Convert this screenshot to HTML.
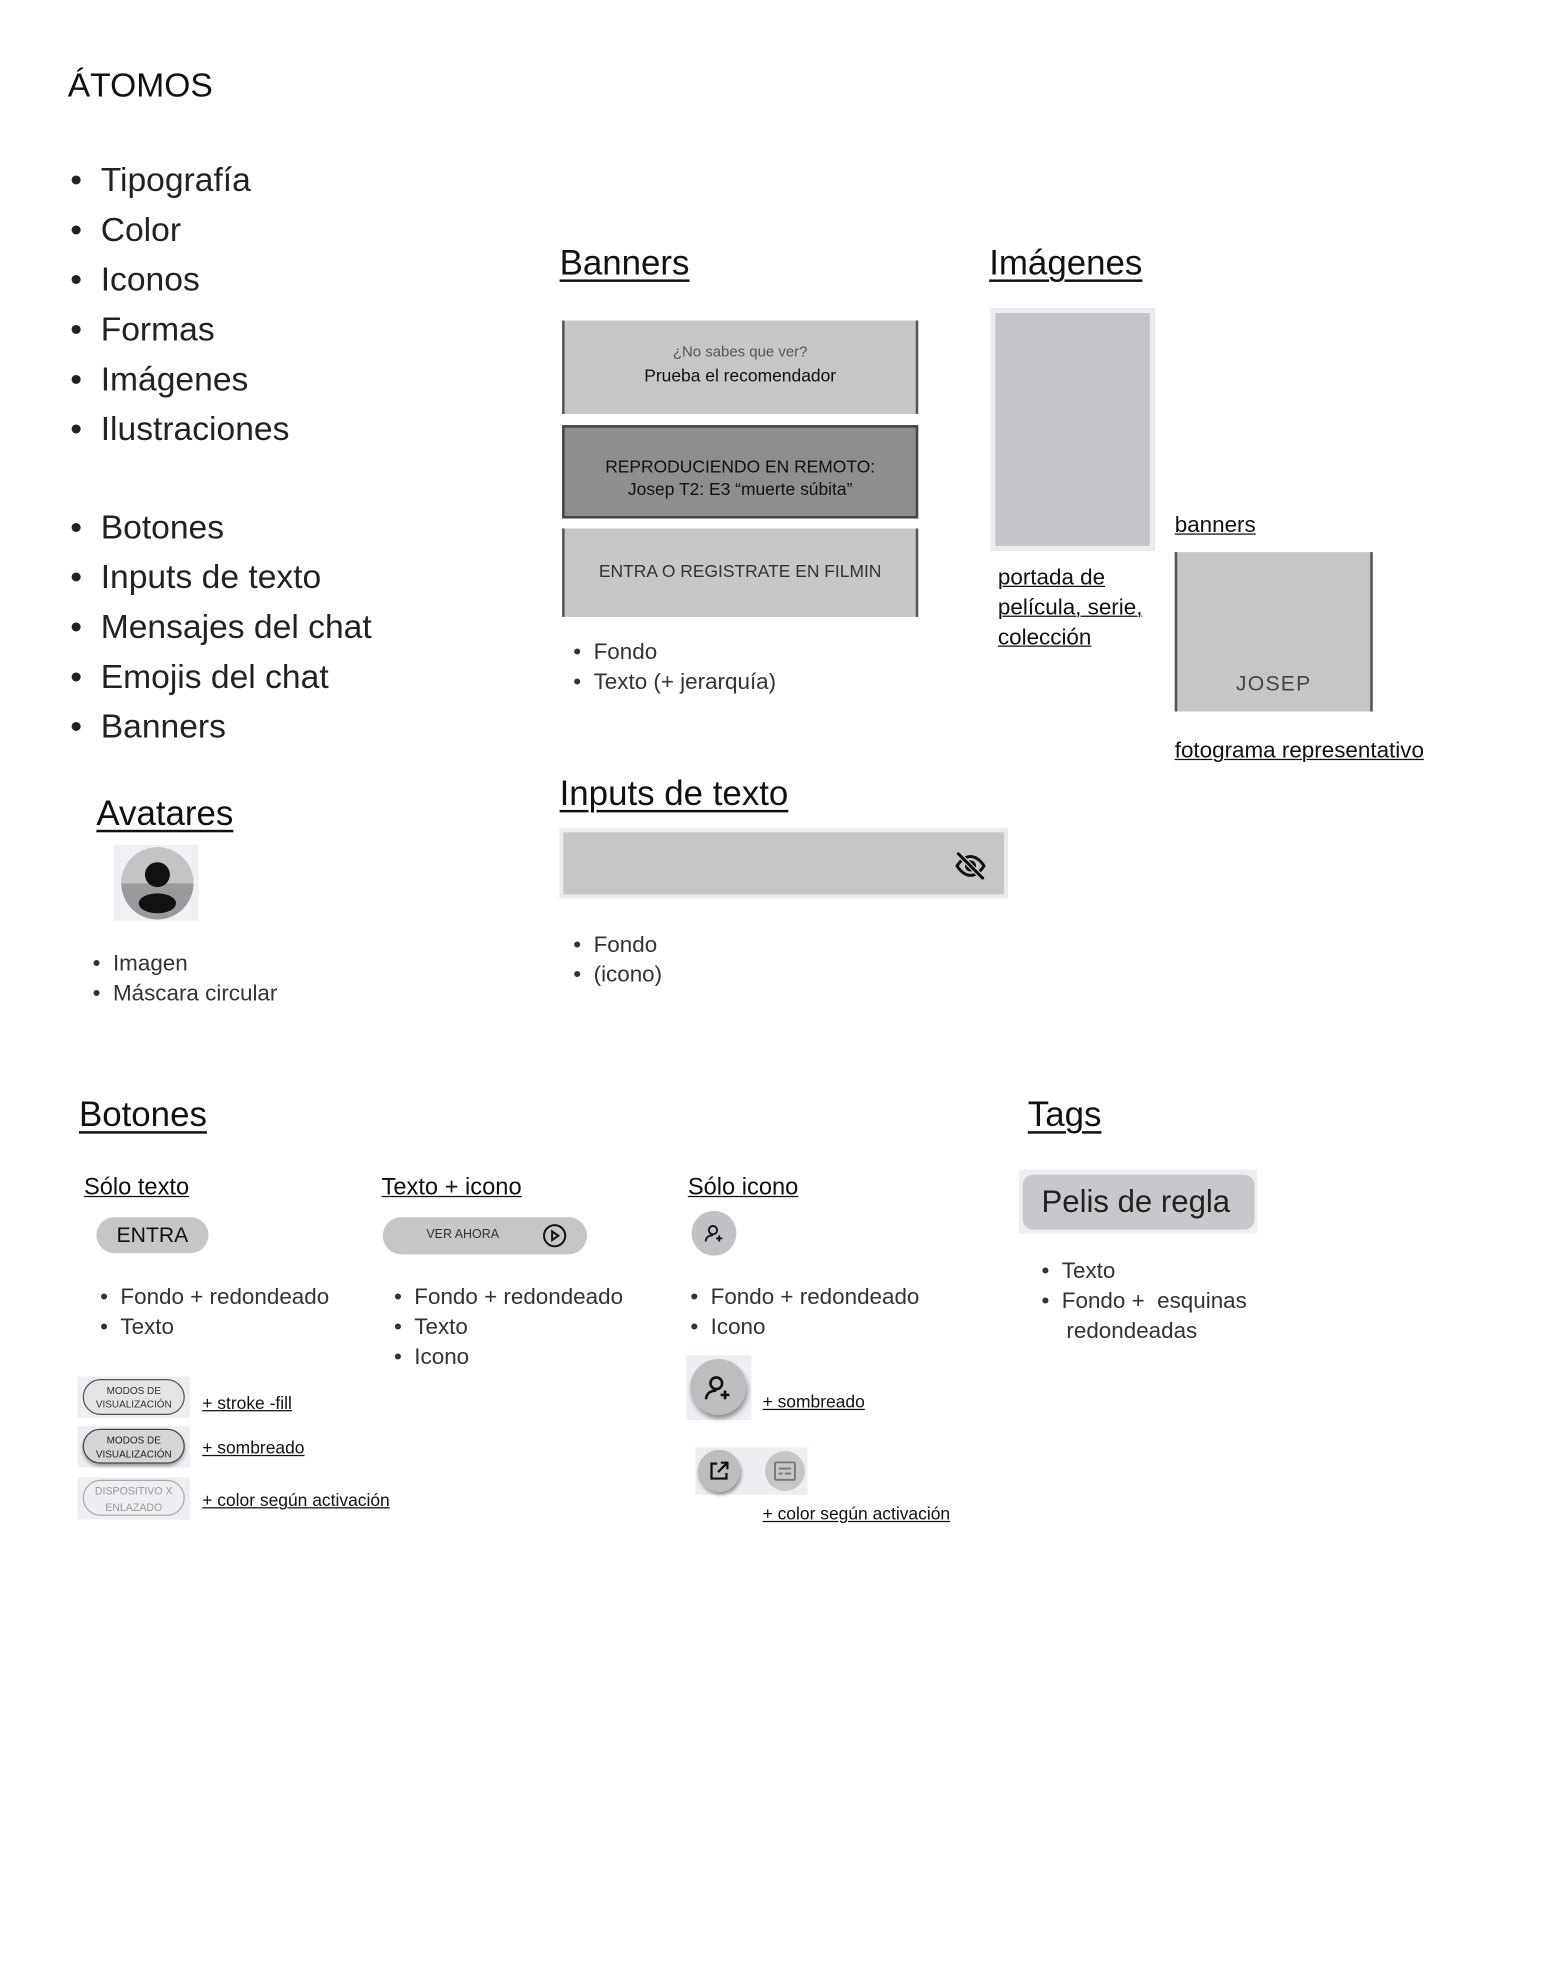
<!DOCTYPE html>
<html><head><meta charset="utf-8">
<style>
html,body{margin:0;padding:0;background:#fff;width:1544px;height:1964px;overflow:hidden}
#w{position:absolute;left:3px;top:3px;width:1240px;height:1577px;transform:scale(1.2452);transform-origin:0 0;font-family:"Liberation Sans",sans-serif;color:#111}
.a{position:absolute;white-space:nowrap}
.h{font-size:28px;text-decoration:underline;text-underline-offset:4px;text-decoration-thickness:1.5px;color:#111}
.big{font-size:27px;color:#222}
.u{text-decoration:underline;text-decoration-thickness:1px}
.box{position:absolute;background:#c6c6c8;box-sizing:border-box}
</style></head><body><div id="w">
<div class="a" style="left:52px;top:51px;font-size:27px;color:#111">ÁTOMOS</div>

<div class="a big" style="left:54px;top:122px;line-height:40px">
•&nbsp;&nbsp;Tipografía<br>•&nbsp;&nbsp;Color<br>•&nbsp;&nbsp;Iconos<br>•&nbsp;&nbsp;Formas<br>•&nbsp;&nbsp;Imágenes<br>•&nbsp;&nbsp;Ilustraciones</div>
<div class="a big" style="left:54px;top:401px;line-height:40px">
•&nbsp;&nbsp;Botones<br>•&nbsp;&nbsp;Inputs de texto<br>•&nbsp;&nbsp;Mensajes del chat<br>•&nbsp;&nbsp;Emojis del chat<br>•&nbsp;&nbsp;Banners</div>

<div class="a h" style="left:447px;top:193px">Banners</div>
<div class="box" style="left:449px;top:255px;width:286px;height:75px;border-left:2px solid #555;border-right:2px solid #555;text-align:center;padding-top:18px;font-size:12px;color:#555">¿No sabes que ver?<div style="font-size:14px;color:#111;margin-top:4px">Prueba el recomendador</div></div>
<div class="box" style="left:449px;top:339px;width:286px;height:75px;background:#8e8e90;border:2px solid #444;text-align:center;padding-top:22px;font-size:14px;line-height:18px;color:#111">REPRODUCIENDO EN REMOTO:<br>Josep T2: E3 “muerte súbita”</div>
<div class="box" style="left:449px;top:422px;width:286px;height:71px;border-left:2px solid #555;border-right:2px solid #555;text-align:center;padding-top:26px;font-size:14px;color:#333">ENTRA O REGISTRATE EN FILMIN</div>
<div class="a" style="left:458px;top:509px;font-size:18px;line-height:24px;color:#333">•&nbsp;&nbsp;Fondo<br>•&nbsp;&nbsp;Texto (+ jerarquía)</div>

<div class="a h" style="left:792px;top:193px">Imágenes</div>
<div class="box" style="left:793px;top:245px;width:132px;height:195px;border:4px solid #ececf0;background:#c4c4c8"></div>
<div class="a u" style="left:799px;top:449px;font-size:18px;line-height:24px">portada de<br>película, serie,<br>colección</div>
<div class="a u" style="left:941px;top:409px;font-size:18px">banners</div>
<div class="box" style="left:941px;top:441px;width:159px;height:128px;border-left:2px solid #555;border-right:2px solid #555;text-align:center;padding-top:96px;font-size:17px;color:#444;letter-spacing:1px">JOSEP</div>
<div class="a u" style="left:941px;top:590px;font-size:18px">fotograma representativo</div>

<div class="a h" style="left:447px;top:619px">Inputs de texto</div>
<div class="box" style="left:447px;top:663px;width:360px;height:56px;border:3px solid #ececf0"></div>
<svg class="a" style="left:764px;top:680px" width="26" height="26" viewBox="0 0 24 24" fill="none" stroke="#111" stroke-width="2.2" stroke-linecap="round"><path d="M2 12s4-7 10-7 10 7 10 7-4 7-10 7S2 12 2 12z"/><circle cx="12" cy="12" r="3"/><path d="M3 3l18 18" stroke="#c6c6c8" stroke-width="4"/><path d="M3 3l18 18"/></svg>
<div class="a" style="left:458px;top:744px;font-size:18px;line-height:24px;color:#333">•&nbsp;&nbsp;Fondo<br>•&nbsp;&nbsp;(icono)</div>

<div class="a h" style="left:75px;top:635px">Avatares</div>
<div class="box" style="left:89px;top:676px;width:68px;height:61px;background:#eef0f4"></div>
<svg class="a" style="left:94px;top:677px" width="60" height="60" viewBox="0 0 60 60"><circle cx="30" cy="30" r="29" fill="#9a9a9c"/><path d="M1 30a29 29 0 0 1 58 0z" fill="#c4c4c6"/><circle cx="30" cy="23" r="10" fill="#111"/><ellipse cx="30" cy="46" rx="15" ry="8" fill="#111"/></svg>
<div class="a" style="left:72px;top:759px;font-size:18px;line-height:24px;color:#333">•&nbsp;&nbsp;Imagen<br>•&nbsp;&nbsp;Máscara circular</div>

<div class="a h" style="left:61px;top:877px">Botones</div>
<div class="a u" style="left:65px;top:941px;font-size:19px">Sólo texto</div>
<div class="a u" style="left:304px;top:941px;font-size:19px">Texto + icono</div>
<div class="a u" style="left:550px;top:941px;font-size:19px">Sólo icono</div>
<div class="box" style="left:75px;top:975px;width:90px;height:29px;border-radius:15px;text-align:center;line-height:29px;font-size:17px;color:#111">ENTRA</div>
<div class="box" style="left:305px;top:975px;width:164px;height:30px;border-radius:15px;font-size:10px;line-height:30px;padding-left:35px;color:#333">VER AHORA</div>
<svg class="a" style="left:433px;top:980px" width="20" height="20" viewBox="0 0 20 20" fill="none" stroke="#111" stroke-width="1.6"><circle cx="10" cy="10" r="8.5"/><path d="M8 6.5v7l5-3.5z"/></svg>
<div class="box" style="left:553px;top:970px;width:36px;height:36px;border-radius:50%;background:#c2c2c6"></div>
<svg class="a" style="left:561px;top:978px" width="20" height="20" viewBox="0 0 24 24" fill="none" stroke="#111" stroke-width="1.8"><circle cx="11" cy="9" r="4"/><path d="M4 20c0-4 3-6 7-6M17 14v6M14 17h6"/></svg>
<div class="a" style="left:78px;top:1027px;font-size:18px;line-height:24px;color:#333">•&nbsp;&nbsp;Fondo + redondeado<br>•&nbsp;&nbsp;Texto</div>
<div class="a" style="left:314px;top:1027px;font-size:18px;line-height:24px;color:#333">•&nbsp;&nbsp;Fondo + redondeado<br>•&nbsp;&nbsp;Texto<br>•&nbsp;&nbsp;Icono</div>
<div class="a" style="left:552px;top:1027px;font-size:18px;line-height:24px;color:#333">•&nbsp;&nbsp;Fondo + redondeado<br>•&nbsp;&nbsp;Icono</div>

<div class="box" style="left:60px;top:1103px;width:90px;height:33px;background:#eceef2"></div>
<div class="box" style="left:64px;top:1105px;width:82px;height:29px;border:1px solid #555;border-radius:15px;background:#e4e4e6;text-align:center;font-size:8px;line-height:11px;padding-top:3px;color:#333">MODOS DE<br>VISUALIZACIÓN</div>
<div class="box" style="left:60px;top:1143px;width:90px;height:33px;background:#eceef2"></div>
<div class="box" style="left:64px;top:1145px;width:82px;height:28px;border:1px solid #444;border-radius:15px;background:#d6d6d8;box-shadow:0 2px 3px rgba(0,0,0,.35);text-align:center;font-size:8px;line-height:11px;padding-top:3px;color:#222">MODOS DE<br>VISUALIZACIÓN</div>
<div class="box" style="left:60px;top:1184px;width:90px;height:34px;background:#eceef2"></div>
<div class="box" style="left:64px;top:1186px;width:82px;height:29px;border:1px solid #aaa;border-radius:15px;background:#eceef2;text-align:center;font-size:8.5px;line-height:13px;padding-top:2px;color:#999">DISPOSITIVO X<br>ENLAZADO</div>
<div class="a u" style="left:160px;top:1116px;font-size:14px">+ stroke -fill</div>
<div class="a u" style="left:160px;top:1152px;font-size:14px">+ sombreado</div>
<div class="a u" style="left:160px;top:1194px;font-size:14px">+ color según activación</div>

<div class="box" style="left:549px;top:1086px;width:52px;height:52px;background:#eceef2"></div>
<div class="box" style="left:552px;top:1089px;width:45px;height:45px;border-radius:50%;background:#bdbdc0;box-shadow:1px 3px 4px rgba(0,0,0,.4)"></div>
<svg class="a" style="left:560px;top:1098px" width="28" height="28" viewBox="0 0 24 24" fill="none" stroke="#111" stroke-width="1.8"><circle cx="11" cy="9" r="4"/><path d="M4 20c0-4 3-6 7-6M17 14v6M14 17h6"/></svg>
<div class="a u" style="left:610px;top:1115px;font-size:14px">+ sombreado</div>
<div class="box" style="left:556px;top:1160px;width:90px;height:38px;background:#eceef2"></div>
<div class="box" style="left:558px;top:1162px;width:34px;height:34px;border-radius:50%;background:#bdbdc0;box-shadow:1px 2px 3px rgba(0,0,0,.4)"></div>
<svg class="a" style="left:566px;top:1170px" width="18" height="18" viewBox="0 0 24 24" fill="none" stroke="#111" stroke-width="2.4"><path d="M10 4H4v16h16v-6M14 3h7v7M21 3L11 13"/></svg>
<div class="box" style="left:612px;top:1163px;width:32px;height:32px;border-radius:50%;background:#c6c6c8"></div>
<svg class="a" style="left:619px;top:1171px" width="18" height="16" viewBox="0 0 18 16" fill="none" stroke="#777" stroke-width="1.5"><rect x="1" y="1" width="16" height="14" rx="1"/><path d="M4 6h10M4 10h3M9 10h5"/></svg>
<div class="a u" style="left:610px;top:1205px;font-size:14px">+ color según activación</div>

<div class="a h" style="left:823px;top:877px">Tags</div>
<div class="box" style="left:816px;top:937px;width:191px;height:51px;background:#eceef2"></div>
<div class="box" style="left:819px;top:941px;width:186px;height:44px;border-radius:8px;background:#c8c8cc;font-size:25px;line-height:44px;padding-left:15px;color:#222">Pelis de regla</div>
<div class="a" style="left:834px;top:1006px;font-size:18px;line-height:24px;color:#333">•&nbsp;&nbsp;Texto<br>•&nbsp;&nbsp;Fondo +&nbsp; esquinas<br>&nbsp;&nbsp;&nbsp;&nbsp;redondeadas</div>
</div></body></html>
